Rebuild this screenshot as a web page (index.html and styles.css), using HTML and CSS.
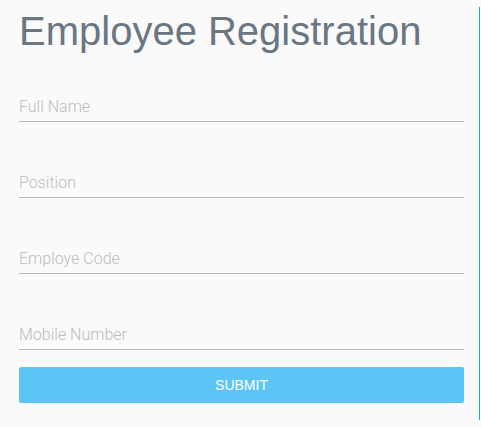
FILE: index.html
```html
<!DOCTYPE html>
<html lang="en">
<head>
<meta charset="utf-8">
<title>Employee Registration</title>
<link rel="stylesheet" href="styles.css">
</head>
<body>
<div class="frame">
  <form class="form">
    <h1 class="title">Employee Registration</h1>
    <div class="field"><input type="text" placeholder="Full Name"></div>
    <div class="field"><input type="text" placeholder="Position"></div>
    <div class="field"><input type="text" placeholder="Employe Code"></div>
    <div class="field"><input type="text" placeholder="Mobile Number"></div>
    <button type="button" class="submit">SUBMIT</button>
  </form>
</div>
</body>
</html>
```
FILE: styles.css
```css
html, body {
  margin: 0;
  padding: 0;
  background: #fafafa;
}
body {
  padding-top: 7px;
  width: 481px;
  height: 427px;
  box-sizing: border-box;
  overflow: hidden;
}
.frame {
  width: 480px;
  height: 413px;
  box-sizing: border-box;
  border-right: 1px solid #0aa6f2;
}
.form {
  width: 445px;
  padding-left: 19px;
  display: flex;
  flex-direction: column;
}
.title {
  margin: 4px 0 0 0;
  font-family: "Liberation Sans", Arial, sans-serif;
  font-weight: normal;
  font-size: 40px;
  line-height: 40px;
  color: #6a7682;
  height: 40px;
}
.field {
  margin-top: 46px;
}
.field:first-of-type {
  margin-top: 41px;
}
.field input {
  display: block;
  width: 100%;
  height: 30px;
  box-sizing: border-box;
  padding: 0;
  border: none;
  border-bottom: 1px solid #b8b8b8;
  background: transparent;
  font-family: Roboto, "Noto Sans", sans-serif;
  font-weight: 300;
  font-size: 16px;
  color: #555;
  outline: none;
}
.field input::placeholder {
  color: #bdbdbd;
}
.submit {
  margin-top: 17px;
  height: 36px;
  width: 100%;
  border: none;
  border-radius: 2px;
  background: #5bc6f6;
  color: #ffffff;
  font-family: "Liberation Sans", Arial, sans-serif;
  font-size: 14px;
  padding: 0;
}
```
